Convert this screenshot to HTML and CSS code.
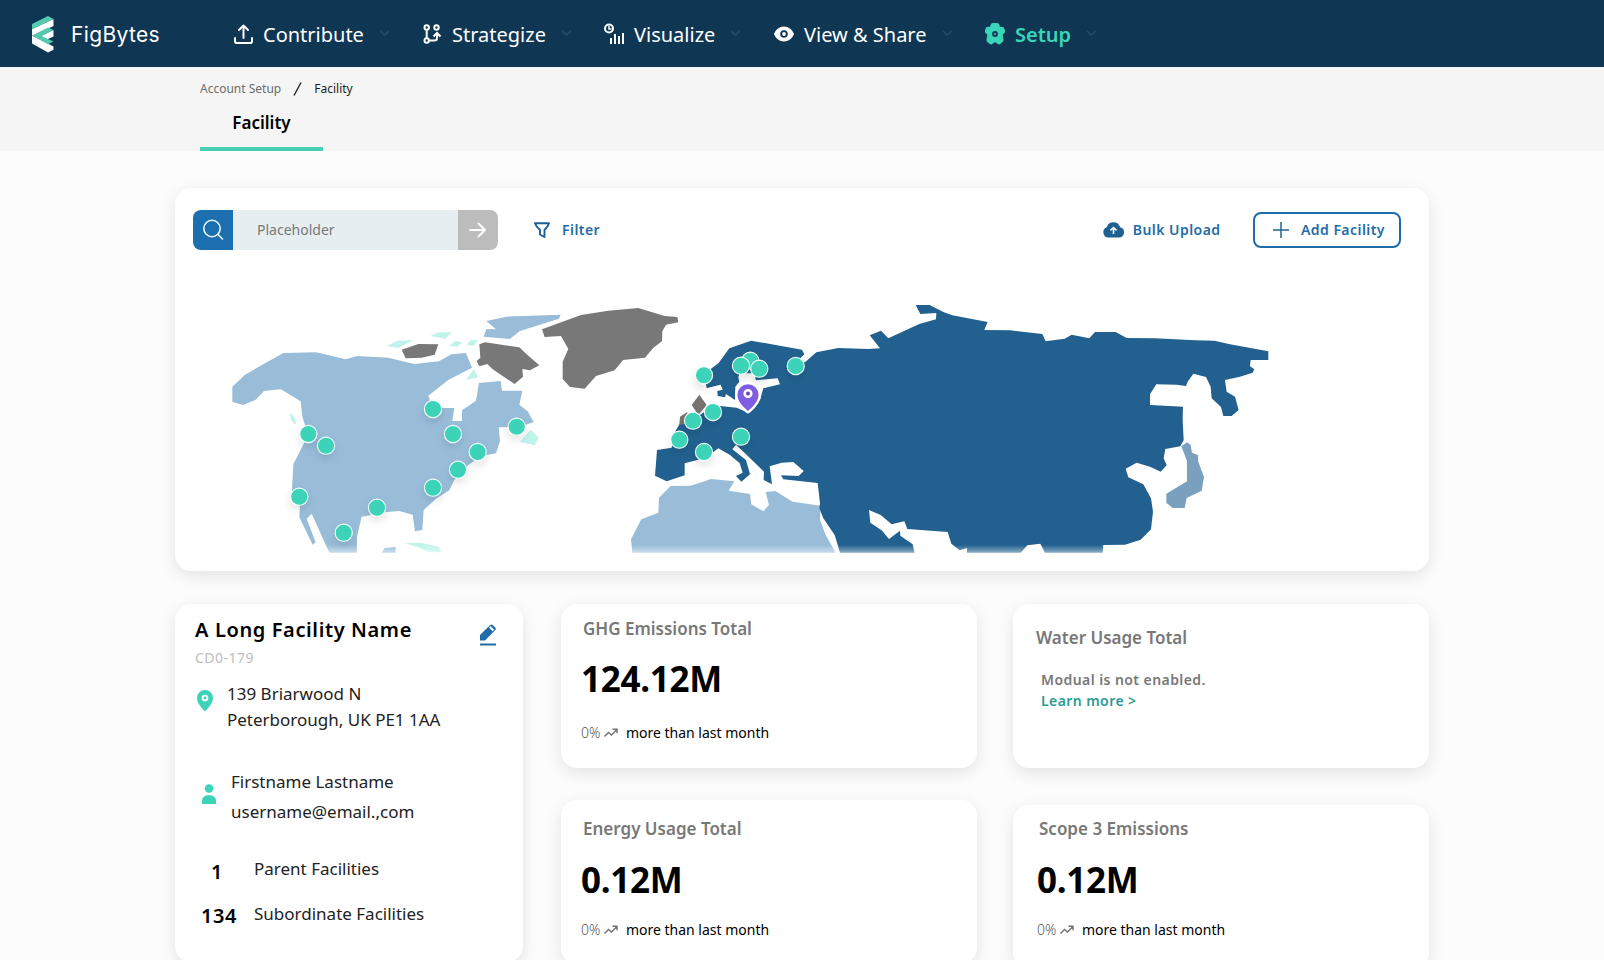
FILE: index.html
```html
<!DOCTYPE html>
<html lang="en">
<head>
<meta charset="utf-8">
<title>FigBytes – Facility</title>
<link rel="stylesheet" href="styles.css">
</head>
<body>
<header class="topbar">
  <a class="brand">
    <svg class="brand-mark" width="22" height="37" viewBox="0 0 22 37">
      <path fill="#fff" d="M0 13 21.500 3v7L0 20zM9 20l12.500-6v6.500L15 23.500zM0 19.500 21.500 30.500v3.200L16 36.500 0 27.500z"/>
      <path fill="#57c9b0" d="M0 8 16 0l5.500 3L0 13.500z"/>
      <path fill="#57c9b0" d="M0 19.500 16 11.500l5.500 2.500L9.500 20 21.500 25.500 16 28.300z"/>
    </svg>
    <span class="brand-name">FigBytes</span>
  </a>
  <nav class="nav">
    <a class="nav-item">
      <svg class="nav-icon" width="20" height="22" viewBox="0 0 20 22" fill="none" stroke="#fff" stroke-width="2" stroke-linecap="round" stroke-linejoin="round"><path d="M9.500 15V2.500M5 7l4.500-4.500L14 7M1 15v3.200Q1 20 2.800 20h13.400q1.800 0 1.800-1.800V15"/></svg>
      <span>Contribute</span>
      <svg class="chev" width="11" height="7" viewBox="0 0 11 7"><path d="M1 1l4.500 4L10 1"/></svg>
    </a>
    <a class="nav-item">
      <svg class="nav-icon" width="20" height="22" viewBox="0 0 20 22" fill="none" stroke="#fff" stroke-width="2"><circle cx="3.700" cy="4.500" r="2.200"/><circle cx="13.500" cy="4.500" r="2.200"/><circle cx="3.700" cy="17.500" r="2.200"/><path d="M3.700 6.500v9M6 17.500h5.500q2.500 0 2.500-2.500v-4M10.500 13.500l3.500-3.500 3.500 3.500"/></svg>
      <span>Strategize</span>
      <svg class="chev" width="11" height="7" viewBox="0 0 11 7"><path d="M1 1l4.500 4L10 1"/></svg>
    </a>
    <a class="nav-item nav-item--wide">
      <svg class="nav-icon" width="20" height="22" viewBox="0 0 20 22" fill="none" stroke="#fff" stroke-width="2"><circle cx="5" cy="5.500" r="4"/><path stroke-width="1.500" d="M5 3v3h2.500"/><path stroke-width="2" d="M7 15v6M11 11v10M15 13v8M19 10v11"/></svg>
      <span>Visualize</span>
      <svg class="chev" width="11" height="7" viewBox="0 0 11 7"><path d="M1 1l4.500 4L10 1"/></svg>
    </a>
    <a class="nav-item nav-item--wide">
      <svg class="nav-icon" width="20" height="22" viewBox="0 0 20 22"><path fill="#fff" fill-rule="evenodd" d="M10 3.500c4.500 0 8 2.800 10 7.500-2 4.700-5.500 7.500-10 7.500S2 15.700 0 11C2 6.300 5.500 3.500 10 3.500zM10 7.200a3.800 3.800 0 100 7.600 3.800 3.800 0 000-7.600z"/><circle cx="10" cy="11" r="1.900" fill="#fff"/></svg>
      <span>View &amp; Share</span>
      <svg class="chev" width="11" height="7" viewBox="0 0 11 7"><path d="M1 1l4.500 4L10 1"/></svg>
    </a>
    <a class="nav-item nav-item--wide nav-item--on">
      <svg class="nav-icon" width="20" height="22" viewBox="0 0 20 22"><path fill="#3ad5b9" stroke="#3ad5b9" stroke-width="2" stroke-linejoin="round" d="M8 1h4q1.300 0 1.500 1.300L14 5l3-.3q1-.1 1.300.8l.7 2.300q.3 1-.5 1.700L16.500 11.500l1 5q.2 1-.6 1.700l-2 1.800q-.9.800-1.900 0L10 18l-3 2q-1 .8-1.900 0l-2-1.800q-.8-.7-.6-1.700l1-5L1.500 9.500Q.7 8.800 1 7.800l.7-2.300Q2 4.600 3 4.700L6 5l.5-2.700Q6.700 1 8 1z"/><circle cx="10" cy="11" r="2.900" fill="#0f3653"/><circle cx="10" cy="11" r="1" fill="#3ad5b9"/></svg>
      <span>Setup</span>
      <svg class="chev" width="11" height="7" viewBox="0 0 11 7"><path d="M1 1l4.500 4L10 1"/></svg>
    </a>
  </nav>
</header>

<div class="subbar">
  <div class="crumbs">
    <span class="crumb">Account Setup</span>
    <svg width="9" height="14" viewBox="0 0 9 14"><path d="M1 13.500 8 .5" stroke="#222" stroke-width="1.400"/></svg>
    <span class="crumb crumb--here">Facility</span>
  </div>
  <div class="tab">Facility</div>
</div>

<main class="page">
  <section class="card map-card">
    <div class="toolbar">
      <div class="search">
        <span class="search-icon"><svg width="22" height="22" viewBox="0 0 22 22" fill="none" stroke="#e9f6ff" stroke-width="1.600" stroke-linecap="round"><circle cx="10" cy="9.500" r="8.200"/><path d="M15.800 15.300l4.700 4.700"/></svg></span>
        <span class="search-field">Placeholder</span>
        <span class="search-go"><svg width="18" height="16" viewBox="0 0 18 16" fill="none" stroke="#fff" stroke-width="1.900" stroke-linecap="round" stroke-linejoin="round"><path d="M1 8h15M9.500 1.500 16 8l-6.500 6.500"/></svg></span>
      </div>
      <a class="action filter">
        <svg width="16" height="17" viewBox="0 0 16 17" fill="none" stroke="#1b5f93" stroke-width="1.900" stroke-linejoin="round"><path d="M1 1.200h14q-1 3.300-4.500 6.800v7L6 12.500V8Q2 4.500 1 1.200z"/></svg>
        <span>Filter</span>
      </a>
      <a class="action bulk">
        <svg width="21" height="17" viewBox="0 0 21 17"><path fill="#1f608f" d="M5.500 16.500A5.300 5.300 0 013.700 6.300a7 7 0 0113.500 0A5.200 5.200 0 0116 16.500z"/><path d="M10.500 13V6.800M7.500 9.300l3-2.800 3 2.800" fill="none" stroke="#fff" stroke-width="1.600"/></svg>
        <span>Bulk Upload</span>
      </a>
      <a class="action add">
        <svg width="16" height="16" viewBox="0 0 16 16" stroke="#1f6496" stroke-width="1.500"><path d="M8 0v16M0 8h16"/></svg>
        <span>Add Facility</span>
      </a>
    </div>
    <svg class="map" width="1254" height="281" viewBox="175 290 1254 281">
      <defs>
        <linearGradient id="fade" x1="0" y1="0" x2="0" y2="1"><stop offset="0" stop-color="#fff" stop-opacity="0"/><stop offset="1" stop-color="#fff" stop-opacity=".5"/></linearGradient>
        <filter id="soft" x="-80%" y="-80%" width="260%" height="260%"><feDropShadow dx="0" dy="4" stdDeviation="4" flood-color="#000" flood-opacity=".12"/></filter>
      </defs>
      <g transform="translate(210 290) scale(.33333)">
        <path fill="#99bdd9" d="M67 290 105 254 220 189 318 187 407 208 442 198 535 203 613 222 687 214 724 193 768 189 786 233 715 270 655 317 662 335 697 354 733 354 727 393 756 393 756 361 798 332 807 279 872 273 876 302 937 302 928 344 953 364 971 396 930 410 866 412 870 453 858 490 815 497 775 525 733 570 718 601 680 625 641 660 637 720 615 724 608 674 568 663 530 666 455 680 441 740 441 788 358 788 305 671 290 687 317 757 308 764 268 682 270 650 246 600 250 523 282 460 290 440 285 405 277 380 272 334 213 298 162 303 137 329 100 345 67 336zM515 788 524 774 557 771 557 788zM829 93 890 80 1052 74 1047 86 930 123 899 147 821 140 829 117 858 118z"/>
        <path fill="#c0f3ea" d="M240 368 255 383 258 405 243 390zM529 168 563 152 611 150 565 173zM661 138 681 128 726 126 706 146zM718 168 736 153 757 157 742 170zM770 164 781 151 806 150 790 168zM768 270 792 237 805 262zM930 455 962 419 987 443 974 466zM585 760 632 758 685 770 696 787 655 787 625 772z"/>
        <path fill="#787878" d="M575 179 625 162 685 163 674 194 635 203 587 205zM808 163 825 157 928 172 950 193 988 226 960 241 937 237 939 260 914 282 848 238 832 222 808 229 800 213 811 203z"/>
      </g>
      <g transform="translate(480 290) scale(.33333)">
        <path fill="#787878" d="M186 118 303 75 385 62 475 54 554 78 592 81 595 97 558 104 547 124 546 154 520 173 495 203 429 210 404 241 348 258 314 296 270 291 248 267 248 215 265 177 243 138 194 141z"/>
        <path fill="#99bdd9" d="M457 788 453 748 484 688 535 668 537 623 572 588 632 587 693 567 763 574 746 602 810 612 814 643 850 664 867 645 857 606 886 603 938 635 1022 647 1020 690 1037 735 1067 788z"/>
        <path fill="#22618f" d="M672 260 695 235 716 219 748 175 813 152 966 179 973 193 950 215 975 217 1009 187 1075 174 1165 177 1200 175 1169 136 1203 122 1225 145 1318 102 1368 88 1369 69 1321 72 1307 45 1349 45 1390 66 1417 76 1523 96 1513 120 1590 121 1687 132 1697 154 1754 146 1775 134 1828 145 1845 126 1907 126 1940 144 2025 145 2145 151 2203 152 2250 163 2365 184 2365 210 2312 210 2310 229 2323 238 2318 248 2280 260 2235 270 2240 305 2265 320 2276 360 2255 378 2230 378 2223 351 2195 325 2192 290 2178 261 2140 251 2123 275 2118 288 2090 284 2029 283 2010 313 2010 345 2109 350 2108 390 2111 450 2101 469 2056 477 2051 505 2060 526 2042 545 2010 530 1970 518 1937 536 1945 562 1990 583 2013 625 2019 665 2013 718 1982 749 1935 764 1870 765 1868 788 1695 788 1681 761 1642 766 1622 788 1461 788 1461 774 1439 781 1414 761 1403 726 1282 717 1273 694 1235 703 1202 675 1167 660 1171 698 1205 721 1227 747 1260 722 1261 737 1298 763 1304 788 1080 788 1064 735 1030 685 1018 655 1020 640 1013 579 910 568 903 556 956 558 971 543 940 516 905 518 869 529 876 583 851 570 852 545 795 490 768 464 757 478 798 510 810 553 784 575 768 558 788 548 779 520 750 495 715 475 697 488 672 505 614 520 614 556 560 574 525 557 531 480 575 473 585 425 600 400 660 375 700 346 680 293z"/>
        <path fill="#fff" d="M672 296 722 284 728 299 712 303 713 318 735 322 738 312 765 330 766 290 778 275 775 262 778 250 822 250 828 271 893 265 900 283 850 295 840 330 804 368 770 353 720 348 695 345 660 320z"/>
        <path fill="#787370" d="M658 314 680 345 655 375 635 345zM600 380 622 366 625 400 598 405z"/>
        <path fill="#7ba0be" d="M2121 457 2132 465 2136 488 2154 495 2154 513 2172 562 2165 602 2120 624 2114 654 2078 654 2059 638 2059 611 2121 574 2121 513 2104 469z"/>
      </g>
      <rect x="175" y="545" width="1254" height="8" fill="url(#fade)"/>
      <g fill="#3dd3b8" stroke="#f2fffc" stroke-width="1.100" filter="url(#soft)">
        <circle cx="308.300" cy="434" r="8.600"/><circle cx="326" cy="445.700" r="8.600"/><circle cx="299.300" cy="496.700" r="8.600"/><circle cx="377" cy="507.700" r="8.600"/><circle cx="343.700" cy="532.700" r="8.600"/><circle cx="433" cy="409" r="8.600"/><circle cx="453" cy="434" r="8.600"/><circle cx="516.700" cy="426.700" r="8.600"/><circle cx="477.700" cy="452" r="8.600"/><circle cx="458" cy="469.700" r="8.600"/><circle cx="433" cy="487.700" r="8.600"/>
        <circle cx="704" cy="375.300" r="8.600"/><circle cx="750.300" cy="360.700" r="8.600"/><circle cx="741" cy="365.700" r="8.600"/><circle cx="759.300" cy="368.700" r="8.600"/><circle cx="795.700" cy="366" r="8.600"/><circle cx="713" cy="412" r="8.600"/><circle cx="693" cy="420.700" r="8.600"/><circle cx="679.300" cy="439.700" r="8.600"/><circle cx="704" cy="452" r="8.600"/><circle cx="741" cy="436.700" r="8.600"/>
      </g>
      <path fill="#7f5de0" stroke="#fff" stroke-width="5" paint-order="stroke" stroke-linejoin="round" d="M748 411c-4-3.600-10.500-9-10.500-16.300a10.500 10.500 0 0121 0c0 7.300-6.500 12.700-10.500 16.300z"/>
      <circle cx="748" cy="393.500" r="3.300" fill="#6847b8" stroke="#fff" stroke-width="2.600"/>
    </svg>
  </section>

  <div class="details">
    <section class="card facility">
      <div class="facility-head">
        <h1>A Long Facility Name</h1>
        <svg width="16" height="22" viewBox="0 0 16 22"><path fill="#1f6ca8" d="M0 16.500V11L10.200.9q1.200-1 2.400 0L15.300 3.600q1 1.200 0 2.400L5 16.500z"/><path fill="#fff" d="M9 3.600l1.500-1.500 3.600 3.600-1.500 1.500z"/><rect y="19.500" width="16" height="2" fill="#1f6ca8"/></svg>
      </div>
      <div class="code">CD0-179</div>
      <div class="info info--address">
        <svg width="16" height="22" viewBox="0 0 16 22"><path fill="#3dd3b8" d="M8 21.500C5 18 0 13.500 0 8a8 8 0 0116 0c0 5.500-5 10-8 13.500z"/><circle cx="8" cy="8" r="2.400" fill="#3dd3b8" stroke="#fff" stroke-width="1.900"/></svg>
        <p>139 Briarwood N<br>Peterborough, UK PE1 1AA</p>
      </div>
      <div class="info info--contact">
        <svg width="14" height="20" viewBox="0 0 14 20" fill="#3dd3b8"><circle cx="7" cy="4.500" r="4.300"/><path d="M0 20v-2.500Q0 11 7 11t7 6.500V20z"/></svg>
        <p>Firstname Lastname<br><span class="email">username@email.,com</span></p>
      </div>
      <div class="count count--single"><b>1</b><span>Parent Facilities</span></div>
      <div class="count"><b>134</b><span>Subordinate Facilities</span></div>
    </section>

    <div class="column column--mid">
      <section class="card metric metric--ghg">
        <h2>GHG Emissions Total</h2>
        <div class="value">124.12M</div>
        <div class="trend"><span class="pct">0%</span><svg width="14" height="10" viewBox="0 0 14 10"><path d="M.5 8.500l4-4 3 2.500L12.500 2M8.500 1.300h4.500v4"/></svg><span>more than last month</span></div>
      </section>
      <section class="card metric metric--energy">
        <h2>Energy Usage Total</h2>
        <div class="value">0.12M</div>
        <div class="trend"><span class="pct">0%</span><svg width="14" height="10" viewBox="0 0 14 10"><path d="M.5 8.500l4-4 3 2.500L12.500 2M8.500 1.300h4.500v4"/></svg><span>more than last month</span></div>
      </section>
    </div>

    <div class="column column--right">
      <section class="card metric metric--water">
        <h2>Water Usage Total</h2>
        <p class="notice">Modual is not enabled.<br><a>Learn more &gt;</a></p>
      </section>
      <section class="card metric metric--scope">
        <h2>Scope 3 Emissions</h2>
        <div class="value">0.12M</div>
        <div class="trend"><span class="pct">0%</span><svg width="14" height="10" viewBox="0 0 14 10"><path d="M.5 8.500l4-4 3 2.500L12.500 2M8.500 1.300h4.500v4"/></svg><span>more than last month</span></div>
      </section>
    </div>
  </div>
</main>
</body>
</html>
```

FILE: styles.css
```css
* { box-sizing: border-box; margin: 0; padding: 0; }
body { height: 960px; overflow: hidden; background: #fcfcfc; font-family: "Noto Sans", sans-serif; color: #222; }
svg { display: block; flex: none; }

.topbar { display: flex; height: 67px; background: #0f3653; }
.brand { display: flex; align-items: center; gap: 17px; width: 234px; padding: 1px 0 0 32px; color: #fff; }
.brand-name { padding-top: 1px; font: 400 21px/26px Inter, sans-serif; letter-spacing: .35px; }
.nav { display: grid; grid-template-columns: 189px 181px 170px 211px 130px; align-items: center; }
.nav-item { display: flex; align-items: center; color: #fff; font-size: 20px; line-height: 28px; white-space: nowrap; }
.nav-icon { margin-right: 9px; }
.nav-item--wide .nav-icon { margin-right: 10px; }
.nav-item span { padding-top: 2px; }
.nav-item--on { color: #3ad5b9; font-weight: 600; }
.chev { margin-left: 15px; fill: none; stroke: #23486a; stroke-width: 1.8; }

.subbar { height: 84px; padding-left: 200px; background: #f5f5f5; }
.crumbs { display: flex; align-items: center; height: 30px; padding-top: 13px; gap: 12px; font-size: 12px; line-height: 16px; }
.crumb { color: #6c6c6c; }
.crumb--here { color: #1d1d1d; }
.tab { width: 123px; height: 54px; padding-top: 14px; border-bottom: 4px solid #47ceb3; font-size: 17px; line-height: 24px; font-weight: 600; color: #000; text-align: center; }

.page { width: 1254px; margin: 37px 0 0 175px; }
.card { background: #fff; border-radius: 16px; box-shadow: 0 5px 16px rgba(0, 0, 0, .1); }
.map-card { height: 383px; padding-top: 22px; }
.toolbar { display: flex; align-items: center; height: 40px; padding: 0 28px 0 18px; }
.search { display: flex; width: 305px; height: 40px; border-radius: 8px; overflow: hidden; }
.search-icon, .search-go { display: grid; place-items: center; width: 40px; }
.search-icon { background: #1b6fae; }
.search-go { background: #bcbcbc; }
.search-field { flex: 1; padding-left: 24px; background: #e6eef2; color: #787878; font-size: 14px; line-height: 40px; }
.action { display: flex; align-items: center; color: #1f6ca8; font-size: 14px; line-height: 20px; font-weight: 600; letter-spacing: .45px; white-space: nowrap; }
.filter { gap: 12px; margin-left: 36px; }
.bulk { gap: 9px; margin-left: auto; margin-right: 32.5px; }
.bulk svg { margin-top: -1px; }
.add { gap: 12px; width: 148px; height: 36px; padding-left: 18px; border: 2px solid #1f6ca8; border-radius: 8px; }
.map { margin-top: 39.6px; }

.details { display: flex; align-items: flex-start; margin-top: 32.6px; }
.facility { width: 348px; height: 358px; padding: 12px 27px 0 20px; }
.facility-head { display: flex; justify-content: space-between; height: 28px; }
.facility-head h1 { font-size: 20px; line-height: 28px; font-weight: 600; letter-spacing: .62px; color: #000; }
.facility-head svg { margin-top: 8px; }
.code { margin-top: 4px; height: 20px; font-size: 14px; line-height: 20px; letter-spacing: .5px; color: #bdbdbd; }
.info { display: flex; font-size: 17px; }
.info--address { gap: 14px; margin-top: 13px; padding-left: 2px; line-height: 26px; }
.info--address svg { margin-top: 9px; }
.info--contact { gap: 15px; margin-top: 34px; padding-left: 7px; line-height: 30px; }
.info--contact svg { margin-top: 17px; }
.count { display: grid; grid-template-columns: 46px 1fr; gap: 13px; margin-top: 15px; font-size: 17px; line-height: 30px; }
.count b { padding-top: 2px; padding-left: 2px; font-size: 20px; line-height: 30px; font-weight: 600; letter-spacing: .6px; color: #000; text-align: center; height: 30px; }
.count--single b { padding: 3px 2px 0 0; }
.info--contact + .count { margin-top: 27px; }

.column { display: flex; flex-direction: column; width: 416px; }
.column--mid { gap: 32px; margin-left: 38px; }
.column--right { gap: 37px; margin-left: 36px; }
.metric { height: 164px; padding: 13px 20px 0; }
.metric h2 { padding-left: 2px; font-size: 17px; line-height: 24px; font-weight: 600; color: #787878; }
.value { margin-top: 18px; font-size: 35px; line-height: 40px; font-weight: 700; color: #000; letter-spacing: -.3px; }
.trend { display: flex; align-items: center; margin-top: 24px; font-size: 14px; line-height: 20px; color: #000; }
.trend svg { margin: 0 7.5px 0 4px; fill: none; stroke: #707070; stroke-width: 1.4; }
.pct { color: #555; font-weight: 300; }
.metric--energy { padding-top: 17px; }
.metric--energy .value, .metric--scope .value { margin-top: 19px; }
.metric--energy .trend, .metric--scope .trend { margin-top: 20.5px; }
.metric--water { padding-top: 22px; padding-left: 21px; }
.metric--scope { padding-top: 12px; padding-left: 24px; }
.notice { margin: 19px 0 0 7px; font-size: 14px; line-height: 21px; font-weight: 600; letter-spacing: .43px; color: #787878; }
.notice a { color: #2b9c91; }
```
